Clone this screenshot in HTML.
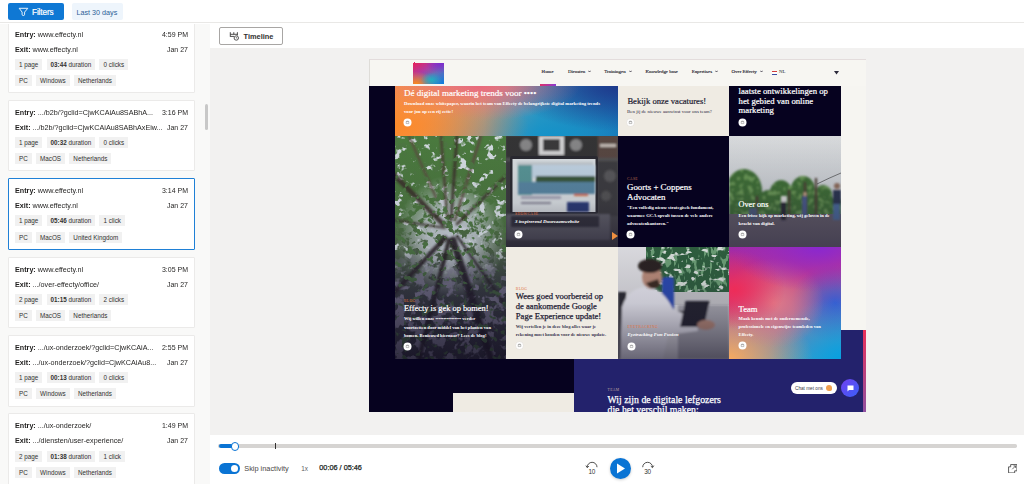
<!DOCTYPE html>
<html><head><meta charset="utf-8"><style>
*{box-sizing:border-box;margin:0;padding:0}
html,body{width:1024px;height:484px;overflow:hidden;background:#fff;font-family:"Liberation Sans",sans-serif;color:#323130}
.a{position:absolute}
.t{position:absolute}
#top{left:0;top:0;width:1024px;height:23px;background:#fff;border-bottom:1px solid #e9e8e6}
#filters{left:8px;top:3px;width:56px;height:17px;background:#0f78d4;border-radius:2px}
#last{left:72px;top:3px;width:51px;height:17px;background:#eef5fc;border-radius:2px}
#left{left:0;top:24px;width:210px;height:460px;background:#f9f9f8;overflow:hidden}
.card{position:absolute;left:8px;width:187px;height:71.5px;background:#fff;border:1px solid #ebeae9;border-radius:1px}
.card.sel{border:1.3px solid #1f80d6}
.card .l{position:absolute;left:6px;font-size:7.2px;line-height:10px;transform:scaleY(1.12);transform-origin:0 7.5px;color:#201f1e;white-space:nowrap}
.card .r{position:absolute;right:6px;font-size:7.0px;line-height:10px;transform:scaleY(1.12);transform-origin:0 7.5px;color:#201f1e;white-space:nowrap;text-align:right}
.row{position:absolute;left:6px;display:flex;gap:4.3px}
.chip{position:relative;height:11px;background:#f1f1f1;font-size:6.3px;color:#323130;white-space:nowrap;padding:0 4px;line-height:11px}
#scroll{left:205px;top:104px;width:3px;height:26px;background:#c8c8c8;border-radius:2px}
#right{left:210px;top:24px;width:814px;height:460px;background:#fff}
#tlbtn{left:219px;top:27px;width:64px;height:17.5px;border:1px solid #a8a6a4;border-radius:2px;background:#fff}
#grey{left:210px;top:48px;width:814px;height:386.5px;background:#f2f1f0}
#frame{left:369px;top:59px;width:497px;height:353px;background:#f6f5f1;overflow:hidden}
.cell{position:absolute;overflow:hidden}
.ic{position:absolute;width:8px;height:8px;border-radius:50%;background:#fff}
.ic:after{content:"";position:absolute;left:2.8px;top:3px;width:2.4px;height:2px;border:0.5px solid #888;border-radius:0.4px}
</style></head><body>
<div id="top" class="a">
<div id="filters" class="a"><svg class="a" style="left:10px;top:4px" width="11" height="11" viewBox="0 0 11 11"><path d="M1.2 1.3 H9.8 L6.6 5.1 V7.3 A1.25 1.25 0 0 1 4.1 7.3 V5.1 Z" fill="none" stroke="#fff" stroke-width="0.9" stroke-linejoin="round"/></svg>
<div class="t " style="left:24.00px;top:4.84px;font-size:8.2px;line-height:9.839999999999998px;font-family:'Liberation Sans',sans-serif;color:#fff;white-space:nowrap;font-weight:normal;letter-spacing:-0.1px;-webkit-text-stroke:0.2px #fff">Filters</div>
</div>
<div id="last" class="a"><div class="t " style="left:4.50px;top:6.28px;font-size:7.2px;line-height:8.64px;font-family:'Liberation Sans',sans-serif;color:#2b5f97;white-space:nowrap;">Last 30 days</div></div>
</div>
<div id="left" class="a">
<div class="card" style="top:-2.5px"><div class="l" style="top:7px"><b>Entry:</b> www.effecty.nl</div><div class="r" style="top:7.05px">4:59 PM</div><div class="l" style="top:22px"><b>Exit:</b> www.effecty.nl</div><div class="r" style="top:22.05px">Jan 27</div><div class="row" style="top:36.3px"><div class="chip">1 page</div><div class="chip"><b>03:44</b> duration</div><div class="chip">0 clicks</div></div><div class="row" style="top:52.4px"><div class="chip">PC</div><div class="chip">Windows</div><div class="chip">Netherlands</div></div></div>
<div class="card" style="top:75.9px"><div class="l" style="top:7px"><b>Entry:</b> .../b2b/?gclid=CjwKCAiAu8SABhA...</div><div class="r" style="top:7.05px">3:16 PM</div><div class="l" style="top:22px"><b>Exit:</b> .../b2b/?gclid=CjwKCAiAu8SABhAxEiw...</div><div class="r" style="top:22.05px">Jan 27</div><div class="row" style="top:36.3px"><div class="chip">1 page</div><div class="chip"><b>00:32</b> duration</div><div class="chip">0 clicks</div></div><div class="row" style="top:52.4px"><div class="chip">PC</div><div class="chip">MacOS</div><div class="chip">Netherlands</div></div></div>
<div class="card sel" style="top:154.2px"><div class="l" style="top:7px"><b>Entry:</b> www.effecty.nl</div><div class="r" style="top:7.05px">3:14 PM</div><div class="l" style="top:22px"><b>Exit:</b> www.effecty.nl</div><div class="r" style="top:22.05px">Jan 27</div><div class="row" style="top:36.3px"><div class="chip">1 page</div><div class="chip"><b>05:46</b> duration</div><div class="chip">1 click</div></div><div class="row" style="top:52.4px"><div class="chip">PC</div><div class="chip">MacOS</div><div class="chip">United Kingdom</div></div></div>
<div class="card" style="top:232.6px"><div class="l" style="top:7px"><b>Entry:</b> www.effecty.nl</div><div class="r" style="top:7.05px">3:05 PM</div><div class="l" style="top:22px"><b>Exit:</b> .../over-effecty/office/</div><div class="r" style="top:22.05px">Jan 27</div><div class="row" style="top:36.3px"><div class="chip">2 page</div><div class="chip"><b>01:15</b> duration</div><div class="chip">2 clicks</div></div><div class="row" style="top:52.4px"><div class="chip">PC</div><div class="chip">MacOS</div><div class="chip">Netherlands</div></div></div>
<div class="card" style="top:311.0px"><div class="l" style="top:7px"><b>Entry:</b> .../ux-onderzoek/?gclid=CjwKCAiA...</div><div class="r" style="top:7.05px">2:55 PM</div><div class="l" style="top:22px"><b>Exit:</b> .../ux-onderzoek/?gclid=CjwKCAiAu8...</div><div class="r" style="top:22.05px">Jan 27</div><div class="row" style="top:36.3px"><div class="chip">1 page</div><div class="chip"><b>00:13</b> duration</div><div class="chip">0 clicks</div></div><div class="row" style="top:52.4px"><div class="chip">PC</div><div class="chip">Windows</div><div class="chip">Netherlands</div></div></div>
<div class="card" style="top:389.4px"><div class="l" style="top:7px"><b>Entry:</b> .../ux-onderzoek/</div><div class="r" style="top:7.05px">1:49 PM</div><div class="l" style="top:22px"><b>Exit:</b> .../diensten/user-experience/</div><div class="r" style="top:22.05px">Jan 27</div><div class="row" style="top:36.3px"><div class="chip">2 page</div><div class="chip"><b>01:38</b> duration</div><div class="chip">1 click</div></div><div class="row" style="top:52.4px"><div class="chip">PC</div><div class="chip">Windows</div><div class="chip">Netherlands</div></div></div>
</div>
<div id="scroll" class="a"></div>
<div id="right" class="a"></div>
<div id="tlbtn" class="a"><svg class="a" style="left:8px;top:2px" width="12" height="12" viewBox="0 0 12 12"><path d="M2.3 2.2 V6.8 M9.4 2.2 V5.4 M5.8 2.2 V4.3 M2.3 4.3 H9.4 M2.3 6.4 H6" fill="none" stroke="#3b3a39" stroke-width="0.9"/><circle cx="8.3" cy="8" r="2.2" fill="#fff" stroke="#3b3a39" stroke-width="0.85"/><path d="M8.3 6.9 V8.1 H9.2" fill="none" stroke="#3b3a39" stroke-width="0.6"/></svg>
<div class="t " style="left:23.60px;top:4.59px;font-size:7.4px;line-height:8.88px;font-family:'Liberation Sans',sans-serif;color:#323130;white-space:nowrap;font-weight:bold">Timeline</div>
</div>
<div id="grey" class="a"></div>
<div id="frame" class="a"><div class="cell" style="left:0px;top:0px;width:497px;height:27px;background:#f7f6f2;border-top:1px solid #e3dcdc;border-left:1px solid #dedcd8"></div><svg class="a" style="left:42px;top:2px" width="35" height="25" viewBox="0 0 35 25"><defs><linearGradient id="lg1" x1="0" y1="0" x2="1" y2="1"><stop offset="0" stop-color="#e8205a"/><stop offset="0.35" stop-color="#b03aa0"/><stop offset="0.6" stop-color="#6a6ab8"/><stop offset="1" stop-color="#0a80e0"/></linearGradient><radialGradient id="lg2" cx="0.1" cy="1" r="0.6"><stop offset="0" stop-color="#ff8a1a"/><stop offset="1" stop-color="#ff8a1a" stop-opacity="0"/></radialGradient><radialGradient id="lg3" cx="0.9" cy="0" r="0.5"><stop offset="0" stop-color="#7a2ad0"/><stop offset="1" stop-color="#7a2ad0" stop-opacity="0"/></radialGradient><radialGradient id="lg4" cx="0.6" cy="0.8" r="0.35"><stop offset="0" stop-color="#20b0c0"/><stop offset="1" stop-color="#20b0c0" stop-opacity="0"/></radialGradient><filter id="rough" x="-10%" y="-10%" width="120%" height="120%"><feTurbulence type="fractalNoise" baseFrequency="0.6" numOctaves="2" seed="2"/><feDisplacementMap in="SourceGraphic" scale="1.6"/></filter></defs><g filter="url(#rough)"><rect x="2" y="2" width="31" height="21" fill="url(#lg1)"/><rect x="2" y="2" width="31" height="21" fill="url(#lg2)"/><rect x="2" y="2" width="31" height="21" fill="url(#lg3)"/><rect x="2" y="2" width="31" height="21" fill="url(#lg4)"/></g></svg><div class="t " style="left:172.60px;top:10.01px;font-size:4.9px;line-height:5.88px;font-family:'Liberation Serif',serif;color:#1e1c2e;white-space:nowrap;-webkit-text-stroke:0.12px #1e1c2e">Home</div><div class="t " style="left:198.90px;top:10.01px;font-size:4.9px;line-height:5.88px;font-family:'Liberation Serif',serif;color:#1e1c2e;white-space:nowrap;-webkit-text-stroke:0.12px #1e1c2e">Diensten</div><svg class="a" style="left:219.0px;top:11.2px" width="3" height="3" viewBox="0 0 3 3"><path d="M0.3 0.7 L1.5 2 L2.7 0.7" fill="none" stroke="#2c2a3a" stroke-width="0.8"/></svg><div class="t " style="left:235.30px;top:10.01px;font-size:4.9px;line-height:5.88px;font-family:'Liberation Serif',serif;color:#1e1c2e;white-space:nowrap;-webkit-text-stroke:0.12px #1e1c2e">Trainingen</div><svg class="a" style="left:259.5px;top:11.2px" width="3" height="3" viewBox="0 0 3 3"><path d="M0.3 0.7 L1.5 2 L2.7 0.7" fill="none" stroke="#2c2a3a" stroke-width="0.8"/></svg><div class="t " style="left:276.50px;top:10.01px;font-size:4.9px;line-height:5.88px;font-family:'Liberation Serif',serif;color:#1e1c2e;white-space:nowrap;-webkit-text-stroke:0.12px #1e1c2e">Knowledge base</div><div class="t " style="left:322.70px;top:10.01px;font-size:4.9px;line-height:5.88px;font-family:'Liberation Serif',serif;color:#1e1c2e;white-space:nowrap;-webkit-text-stroke:0.12px #1e1c2e">Expertises</div><svg class="a" style="left:346.1px;top:11.2px" width="3" height="3" viewBox="0 0 3 3"><path d="M0.3 0.7 L1.5 2 L2.7 0.7" fill="none" stroke="#2c2a3a" stroke-width="0.8"/></svg><div class="t " style="left:362.50px;top:10.01px;font-size:4.9px;line-height:5.88px;font-family:'Liberation Serif',serif;color:#1e1c2e;white-space:nowrap;-webkit-text-stroke:0.12px #1e1c2e">Over Effecty</div><svg class="a" style="left:390.5px;top:11.2px" width="3" height="3" viewBox="0 0 3 3"><path d="M0.3 0.7 L1.5 2 L2.7 0.7" fill="none" stroke="#2c2a3a" stroke-width="0.8"/></svg><div class="a" style="left:403px;top:11.8px;width:5px;height:3.8px;background:linear-gradient(#d23a3a 0 33%,#fff 33% 66%,#3a4aa0 66%)"></div><div class="t " style="left:410.00px;top:10.01px;font-size:4.9px;line-height:5.88px;font-family:'Liberation Serif',serif;color:#1e1c2e;white-space:nowrap;">NL</div><svg class="a" style="left:465px;top:12px" width="5" height="4" viewBox="0 0 5 4"><path d="M0 0 H5 L2.5 3.5Z" fill="#2c2a3a"/></svg><div class="a" style="left:171px;top:25.4px;width:16px;height:1.6px;background:linear-gradient(90deg,#e0306a,#8a3ad0)"></div><div class="cell" style="left:0px;top:27px;width:472px;height:326px;background:#06021f;"></div><div class="cell" style="left:472px;top:271px;width:22px;height:82px;background:#23226c;"></div><div class="cell" style="left:494px;top:271px;width:3px;height:82px;background:linear-gradient(#e8305a,#9050a0);"></div><div class="cell" style="left:26px;top:27px;width:223px;height:50px;background:radial-gradient(ellipse 60% 90% at 0% 80%,#fb8a2a 0%,rgba(251,138,42,0) 100%),radial-gradient(ellipse 45% 70% at 38% 0%,#e96a7c 0%,rgba(233,106,124,0) 100%),radial-gradient(ellipse 50% 90% at 100% 0%,#1e3a8c 0%,rgba(30,58,140,0) 100%),radial-gradient(ellipse 60% 100% at 70% 100%,#1492c8 0%,rgba(20,146,200,0) 100%),linear-gradient(90deg,#f49050 0%,#d8a08a 40%,#3a9ac0 65%,#1a66b0 100%);"><div class="t " style="left:9.00px;top:1.96px;font-size:9.0px;line-height:10.799999999999999px;font-family:'Liberation Serif',serif;color:#fff;white-space:nowrap;-webkit-text-stroke:0.2px #fff">Dé digital marketing trends voor ••••</div><div class="t " style="left:9.00px;top:13.76px;font-size:4.7px;line-height:7.9px;font-family:'Liberation Serif',serif;color:#fff;white-space:nowrap;font-weight:bold">Download onze whitepaper, waarin het team van Effecty de belangrijkste digital marketing trends<br>voor jou op een rij zette!</div><svg class="a" style="left:8.30px;top:32.20px" width="9" height="9" viewBox="0 0 9 9"><circle cx="4.5" cy="4.5" r="4" fill="#fff"/><path d="M3.2 3.6 H5.8 V5.6 H3.2Z M3.6 3.6 V3.1 H5.4 V3.6" fill="none" stroke="#777" stroke-width="0.45"/></svg></div><div class="cell" style="left:249px;top:27px;width:111px;height:50px;background:#efebe3;"><div class="t " style="left:9.40px;top:10.14px;font-size:8.6px;line-height:10.319999999999999px;font-family:'Liberation Serif',serif;color:#1c1a30;white-space:nowrap;-webkit-text-stroke:0.2px #1c1a30">Bekijk onze vacatures!</div><div class="t " style="left:9.00px;top:22.56px;font-size:4.95px;line-height:5.94px;font-family:'Liberation Serif',serif;color:#2a2840;white-space:nowrap;">Ben jij de nieuwe aanwinst voor ons team?</div><svg class="a" style="left:8.20px;top:32.20px" width="9" height="9" viewBox="0 0 9 9"><circle cx="4.5" cy="4.5" r="4" stroke="#d8d4cc" stroke-width="0.5" fill="#fff"/><path d="M3.2 3.6 H5.8 V5.6 H3.2Z M3.6 3.6 V3.1 H5.4 V3.6" fill="none" stroke="#777" stroke-width="0.45"/></svg></div><div class="cell" style="left:360px;top:27px;width:112px;height:50px;background:#06021f;"><div class="t " style="left:9.60px;top:-8.04px;font-size:8.7px;line-height:9.4px;font-family:'Liberation Serif',serif;color:#fff;white-space:nowrap;">nieuwste inzichten over de</div><div class="t " style="left:9.60px;top:1.36px;font-size:8.7px;line-height:9.4px;font-family:'Liberation Serif',serif;color:#fff;white-space:nowrap;-webkit-text-stroke:0.2px #fff">laatste ontwikkelingen op<br>het gebied van online<br>marketing</div><svg class="a" style="left:9.10px;top:32.20px" width="9" height="9" viewBox="0 0 9 9"><circle cx="4.5" cy="4.5" r="4" fill="#fff"/><path d="M3.2 3.6 H5.8 V5.6 H3.2Z M3.6 3.6 V3.1 H5.4 V3.6" fill="none" stroke="#777" stroke-width="0.45"/></svg></div><div class="cell" style="left:26px;top:77px;width:111px;height:223px;background:#6a7a70;"><svg class="a" style="left:0;top:0" width="111" height="223" viewBox="0 0 111 223"><defs><linearGradient id="gfsky" x1="0" y1="0" x2="0" y2="1"><stop offset="0" stop-color="#4a7a3e"/><stop offset="0.35" stop-color="#4a743e"/><stop offset="0.5" stop-color="#4a6244"/><stop offset="0.7" stop-color="#404844"/><stop offset="1" stop-color="#34343e"/></linearGradient><linearGradient id="gfb" x1="0" y1="0" x2="0" y2="1"><stop offset="0" stop-color="#1a1630" stop-opacity="0"/><stop offset="0.5" stop-color="#1a1630" stop-opacity="0.1"/><stop offset="0.7" stop-color="#1a1630" stop-opacity="0.45"/><stop offset="1" stop-color="#100c20" stop-opacity="0.72"/></linearGradient><filter id="b1" x="-20%" y="-20%" width="140%" height="140%"><feGaussianBlur stdDeviation="1.2"/></filter><filter id="b2" x="-20%" y="-20%" width="140%" height="140%"><feGaussianBlur stdDeviation="2.5"/></filter></defs><rect width="111" height="223" fill="url(#gfsky)"/>
<filter id="sky1" x="0" y="0" width="100%" height="100%" color-interpolation-filters="sRGB"><feTurbulence type="fractalNoise" baseFrequency="0.11" numOctaves="3" seed="7"/><feColorMatrix type="matrix" values="0 0 0 0 0.82  0 0 0 0 0.85  0 0 0 0 0.87  10 0 0 0 -5.9"/><feGaussianBlur stdDeviation="0.5"/></filter>
<filter id="sky3" x="0" y="0" width="100%" height="100%" color-interpolation-filters="sRGB"><feTurbulence type="fractalNoise" baseFrequency="0.12" numOctaves="3" seed="29"/><feColorMatrix type="matrix" values="0 0 0 0 0.76  0 0 0 0 0.79  0 0 0 0 0.82  10 0 0 0 -3.8"/><feGaussianBlur stdDeviation="0.6"/></filter>
<filter id="fol2" x="0" y="0" width="100%" height="100%" color-interpolation-filters="sRGB"><feTurbulence type="fractalNoise" baseFrequency="0.15" numOctaves="2" seed="11"/><feColorMatrix type="matrix" values="0 0 0 0 0.30  0 0 0 0 0.46  0 0 0 0 0.26  10 0 0 0 -6.0"/><feGaussianBlur stdDeviation="0.5"/></filter>
<radialGradient id="rg1" cx="0.5" cy="0.45" r="0.5" gradientTransform="translate(0.5 0.45) scale(1 0.55) translate(-0.5 -0.45)"><stop offset="0" stop-color="#fff"/><stop offset="0.45" stop-color="#ddd"/><stop offset="1" stop-color="#000"/></radialGradient>
<mask id="m3"><rect width="111" height="223" fill="url(#rg1)"/></mask>
<linearGradient id="mg1" x1="0" y1="0" x2="0" y2="1"><stop offset="0.5" stop-color="#fff"/><stop offset="0.68" stop-color="#000"/></linearGradient><mask id="m1"><rect width="111" height="223" fill="url(#mg1)"/></mask><linearGradient id="mg2" x1="0" y1="0" x2="0" y2="1"><stop offset="0.5" stop-color="#000"/><stop offset="0.68" stop-color="#fff"/></linearGradient><mask id="m2"><rect width="111" height="223" fill="url(#mg2)"/></mask>
<g mask="url(#m1)"><rect width="111" height="223" filter="url(#sky1)"/></g>
<g mask="url(#m3)"><rect width="111" height="223" filter="url(#sky3)"/></g>
<filter id="sky2" x="0" y="0" width="100%" height="100%" color-interpolation-filters="sRGB"><feTurbulence type="fractalNoise" baseFrequency="0.1" numOctaves="3" seed="17"/><feColorMatrix type="matrix" values="0 0 0 0 0.55  0 0 0 0 0.54  0 0 0 0 0.62  10 0 0 0 -5.0"/><feGaussianBlur stdDeviation="0.6"/></filter>
<g mask="url(#m2)"><rect width="111" height="223" filter="url(#sky2)"/></g>
<g stroke-linecap="round" filter="url(#b1)" stroke="#3a302c" opacity="0.9">
<path d="M48 88 L-4 36" stroke-width="5"/>
<path d="M42 64 L14 0" stroke-width="2.2" stroke="#5a4a40"/>
<path d="M52 80 L46 0" stroke-width="2.6" stroke="#4a3c34"/>
<path d="M56 84 L62 0" stroke-width="3"/>
<path d="M60 84 L86 0" stroke-width="2.6" stroke="#5a4a40"/>
<path d="M62 88 L111 40" stroke-width="2.8"/>
<path d="M50 92 L0 84" stroke-width="1.8"/>
<path d="M50 102 L-4 160" stroke-width="4.5" stroke="#2a2426"/>
<path d="M54 104 L24 223" stroke-width="4.5" stroke="#262024"/>
<path d="M58 104 L96 223" stroke-width="7" stroke="#221c20"/>
<path d="M62 100 L111 170" stroke-width="2.6" stroke="#2a2426"/>
</g>
<rect width="111" height="223" filter="url(#fol2)"/>
<rect width="111" height="223" fill="url(#gfb)"/></svg><div class="t " style="left:9.00px;top:162.53px;font-size:3.7px;line-height:4.44px;font-family:'Liberation Serif',serif;color:#e0703a;white-space:nowrap;letter-spacing:0.4px">BLOG</div><div class="t " style="left:9.00px;top:168.43px;font-size:8.4px;line-height:10.08px;font-family:'Liberation Serif',serif;color:#fff;white-space:nowrap;-webkit-text-stroke:0.2px #fff">Effecty is gek op bomen!</div><div class="t " style="left:9.00px;top:179.30px;font-size:4.6px;line-height:8.3px;font-family:'Liberation Serif',serif;color:#fff;white-space:nowrap;font-weight:bold">Wij willen onze •••••••••••••••• verder<br>voortzetten door middel van het planten van<br>bomen. Benieuwd hiernaar? Lees de blog!</div><svg class="a" style="left:8.10px;top:205.50px" width="9" height="9" viewBox="0 0 9 9"><circle cx="4.5" cy="4.5" r="4" fill="#fff"/><path d="M3.2 3.6 H5.8 V5.6 H3.2Z M3.6 3.6 V3.1 H5.4 V3.6" fill="none" stroke="#777" stroke-width="0.45"/></svg></div><div class="cell" style="left:137px;top:77px;width:112px;height:111px;background:#3a3a3c;"><svg class="a" style="left:0;top:0" width="112" height="111" viewBox="0 0 112 111"><defs><linearGradient id="glp" x1="0" y1="0" x2="0" y2="1"><stop offset="0" stop-color="#201c30" stop-opacity="0.05"/><stop offset="0.6" stop-color="#201c30" stop-opacity="0.15"/><stop offset="1" stop-color="#141024" stop-opacity="0.55"/></linearGradient><filter id="b1" x="-20%" y="-20%" width="140%" height="140%"><feGaussianBlur stdDeviation="1.2"/></filter><filter id="b2" x="-20%" y="-20%" width="140%" height="140%"><feGaussianBlur stdDeviation="2.5"/></filter></defs><rect width="112" height="111" fill="#4a4a4e"/>
<g filter="url(#b1)">
<rect x="0" y="0" width="112" height="22" fill="#343436"/>
<circle cx="20" cy="9" r="6" fill="#8a8a8a"/>
<circle cx="70" cy="9" r="6" fill="#8a8a8a"/>
<rect x="33" y="0" width="25" height="19" fill="#dcdcdc"/>
<rect x="37" y="3" width="17" height="12" fill="#3a3a3a"/>
<rect x="92" y="0" width="20" height="22" fill="#5a4a42"/>
<rect x="94" y="8" width="16" height="3" fill="#c8c0b8"/>
<rect x="0" y="22" width="112" height="3" fill="#555"/>
<rect x="92" y="25" width="20" height="55" fill="#3e3e40"/>
<circle cx="104" cy="40" r="6" fill="#5a5a5c"/>
<circle cx="100" cy="60" r="5" fill="#555"/>
<rect x="0" y="25" width="6" height="55" fill="#3a3a3c"/>
</g>
<rect x="4" y="20" width="88" height="58" rx="2" fill="#2a2a30"/>
<rect x="6.5" y="23" width="83" height="53" fill="#e2e8ea"/>
<g filter="url(#b1)">
<rect x="11" y="26" width="76" height="3" fill="#c8d0d4"/>
<rect x="12" y="29" width="77" height="13" fill="#c8dceb"/>
<rect x="12" y="29" width="14" height="30" fill="#5a9a9a"/>
<rect x="30" y="40" width="59" height="6" fill="#3a5a3a"/>
<rect x="12" y="46" width="77" height="12" fill="#5a8aa6"/>
<rect x="15" y="60" width="40" height="3" fill="#aab"/>
<rect x="15" y="66" width="30" height="2" fill="#889"/>
<rect x="61" y="66" width="22" height="10" fill="#2a3a78"/>
<rect x="68" y="58" width="14" height="2" fill="#e07040"/>
</g>
<rect x="0" y="78" width="104" height="26" fill="#66666e" filter="url(#b1)"/>
<rect x="5" y="80" width="88" height="11" fill="#34343c" filter="url(#b1)"/>
<rect width="112" height="111" fill="url(#glp)"/></svg><div class="t " style="left:9.00px;top:76.03px;font-size:3.7px;line-height:4.44px;font-family:'Liberation Serif',serif;color:#e07040;white-space:nowrap;letter-spacing:0.4px">SHOWCASE</div><div class="t " style="left:9.00px;top:82.91px;font-size:4.9px;line-height:5.88px;font-family:'Liberation Serif',serif;color:#fff;white-space:nowrap;font-weight:bold;font-style:italic">3 inspirerend Duurzaamwebsite</div><svg class="a" style="left:8.40px;top:93.50px" width="9" height="9" viewBox="0 0 9 9"><circle cx="4.5" cy="4.5" r="4" fill="#fff"/><path d="M3.2 3.6 H5.8 V5.6 H3.2Z M3.6 3.6 V3.1 H5.4 V3.6" fill="none" stroke="#777" stroke-width="0.45"/></svg><svg class="a" style="left:105px;top:96px" width="7" height="8"><path d="M1 0 L7 4 L1 8Z" fill="#f09040"/></svg></div><div class="cell" style="left:249px;top:77px;width:111px;height:111px;background:#06021f;"><div class="t " style="left:9.00px;top:41.33px;font-size:3.7px;line-height:4.44px;font-family:'Liberation Serif',serif;color:#c07050;white-space:nowrap;letter-spacing:0.4px">CASE</div><div class="t " style="left:9.00px;top:46.80px;font-size:8.9px;line-height:9.8px;font-family:'Liberation Serif',serif;color:#fff;white-space:nowrap;-webkit-text-stroke:0.2px #fff">Goorts + Coppens<br>Advocaten</div><div class="t " style="left:9.00px;top:67.93px;font-size:4.65px;line-height:8px;font-family:'Liberation Serif',serif;color:#fff;white-space:nowrap;font-weight:bold">"Een volledig nieuw strategisch fundament,<br>waarmee GCA opvalt tussen de vele andere<br>advocatenkantoren."</div><svg class="a" style="left:8.30px;top:94.30px" width="9" height="9" viewBox="0 0 9 9"><circle cx="4.5" cy="4.5" r="4" fill="#fff"/><path d="M3.2 3.6 H5.8 V5.6 H3.2Z M3.6 3.6 V3.1 H5.4 V3.6" fill="none" stroke="#777" stroke-width="0.45"/></svg></div><div class="cell" style="left:360px;top:77px;width:112px;height:111px;background:#8a8a90;"><svg class="a" style="left:0;top:0" width="112" height="111" viewBox="0 0 112 111"><defs><linearGradient id="gsky" x1="0" y1="0" x2="0" y2="1"><stop offset="0" stop-color="#d8dadc"/><stop offset="0.6" stop-color="#c8ccd0"/><stop offset="1" stop-color="#b4b8c0"/></linearGradient><linearGradient id="goo" x1="0" y1="0" x2="0" y2="1"><stop offset="0" stop-color="#201c30" stop-opacity="0"/><stop offset="0.45" stop-color="#201c30" stop-opacity="0.08"/><stop offset="1" stop-color="#1a1430" stop-opacity="0.4"/></linearGradient><filter id="b1" x="-20%" y="-20%" width="140%" height="140%"><feGaussianBlur stdDeviation="1.2"/></filter><filter id="b2" x="-20%" y="-20%" width="140%" height="140%"><feGaussianBlur stdDeviation="2.5"/></filter></defs><rect width="112" height="111" fill="#b8bcc4"/>
<rect width="112" height="80" fill="url(#gsky)"/>
<filter id="fol4" x="0" y="0" width="100%" height="100%" color-interpolation-filters="sRGB"><feTurbulence type="fractalNoise" baseFrequency="0.2" numOctaves="2" seed="5"/><feColorMatrix type="matrix" values="0 0 0 0 0.42  0 0 0 0 0.60  0 0 0 0 0.34  10 0 0 0 -5.6"/></filter>
<clipPath id="treeclip"><ellipse cx="15" cy="55" rx="18" ry="22"/><ellipse cx="40" cy="66" rx="12" ry="12"/><ellipse cx="52" cy="60" rx="12" ry="16"/><ellipse cx="74" cy="56" rx="13" ry="16"/><ellipse cx="94" cy="62" rx="10" ry="13"/><ellipse cx="106" cy="70" rx="8" ry="8"/><rect x="0" y="66" width="112" height="14"/></clipPath>
<g filter="url(#b1)"><g clip-path="url(#treeclip)">
<rect width="112" height="90" fill="#3e6c34"/>
<rect width="112" height="90" filter="url(#fol4)"/>
</g></g>
<g stroke="#4a3a32" stroke-width="2.2" filter="url(#b1)">
<path d="M28 60 V86"/><path d="M60 54 V84"/><path d="M76 46 V86"/><path d="M87 42 V86"/>
</g>
<path d="M88 48 Q100 42 112 37" stroke="#333" stroke-width="0.6" fill="none"/>
<rect x="0" y="78" width="112" height="33" fill="#625d68"/>
<g filter="url(#b1)">
<rect x="104" y="54" width="8" height="14" fill="#2a3550"/>
<rect x="104" y="68" width="7" height="16" fill="#4a6a9a"/>
<circle cx="108" cy="50" r="3" fill="#8a6a5a"/>
<rect x="73" y="60" width="5" height="22" fill="#4a5a8a"/>
<circle cx="76" cy="58" r="2.2" fill="#b89a80"/>
<rect x="52" y="64" width="5" height="20" fill="#2a2a34"/>
<rect x="52" y="60" width="6" height="6" fill="#ddd"/>
<rect x="20" y="72" width="8" height="12" fill="#4a5a7a"/>
</g>
<rect width="112" height="111" fill="url(#goo)"/></svg><div class="t " style="left:9.60px;top:64.11px;font-size:8.2px;line-height:9.839999999999998px;font-family:'Liberation Serif',serif;color:#fff;white-space:nowrap;-webkit-text-stroke:0.2px #fff">Over ons</div><div class="t " style="left:9.60px;top:75.85px;font-size:4.6px;line-height:8.2px;font-family:'Liberation Serif',serif;color:#fff;white-space:nowrap;font-weight:bold">Een frisse kijk op marketing, wij geloven in de<br>kracht van digital.</div><svg class="a" style="left:8.90px;top:93.50px" width="9" height="9" viewBox="0 0 9 9"><circle cx="4.5" cy="4.5" r="4" fill="#fff"/><path d="M3.2 3.6 H5.8 V5.6 H3.2Z M3.6 3.6 V3.1 H5.4 V3.6" fill="none" stroke="#777" stroke-width="0.45"/></svg></div><div class="cell" style="left:137px;top:188px;width:112px;height:112px;background:#efebe3;"><div class="t " style="left:9.80px;top:39.73px;font-size:3.7px;line-height:4.44px;font-family:'Liberation Serif',serif;color:#e07040;white-space:nowrap;letter-spacing:0.4px">BLOG</div><div class="t " style="left:9.80px;top:45.25px;font-size:8.6px;line-height:9.7px;font-family:'Liberation Serif',serif;color:#1e1c34;white-space:nowrap;-webkit-text-stroke:0.25px #1e1c34">Wees goed voorbereid op<br>de aankomende Google<br>Page Experience update!</div><div class="t " style="left:9.80px;top:76.10px;font-size:4.6px;line-height:8.3px;font-family:'Liberation Serif',serif;color:#3a3850;white-space:nowrap;font-weight:bold">Wij vertellen je in deze blog alles waar je<br>rekening moet houden voor de nieuwe update.</div><svg class="a" style="left:8.80px;top:94.10px" width="9" height="9" viewBox="0 0 9 9"><circle cx="4.5" cy="4.5" r="4" stroke="#d8d4cc" stroke-width="0.5" fill="#fff"/><path d="M3.2 3.6 H5.8 V5.6 H3.2Z M3.6 3.6 V3.1 H5.4 V3.6" fill="none" stroke="#777" stroke-width="0.45"/></svg></div><div class="cell" style="left:249px;top:188px;width:111px;height:112px;background:#9a9aa4;"><svg class="a" style="left:0;top:0" width="111" height="112" viewBox="0 0 111 112"><defs><linearGradient id="get" x1="0" y1="0" x2="0" y2="1"><stop offset="0" stop-color="#201c30" stop-opacity="0.02"/><stop offset="0.5" stop-color="#201c30" stop-opacity="0.15"/><stop offset="1" stop-color="#141024" stop-opacity="0.6"/></linearGradient><filter id="b1" x="-20%" y="-20%" width="140%" height="140%"><feGaussianBlur stdDeviation="1.2"/></filter><filter id="b2" x="-20%" y="-20%" width="140%" height="140%"><feGaussianBlur stdDeviation="2.5"/></filter></defs><rect width="111" height="112" fill="#dcdce0"/>
<filter id="fol5" x="0" y="0" width="100%" height="100%" color-interpolation-filters="sRGB"><feTurbulence type="fractalNoise" baseFrequency="0.12 0.2" numOctaves="2" seed="9"/><feColorMatrix type="matrix" values="0 0 0 0 0.84  0 0 0 0 0.87  0 0 0 0 0.85  10 0 0 0 -5.9"/></filter>
<rect x="28" y="0" width="83" height="45" fill="#2e5e3e"/>
<filter id="fol6" x="0" y="0" width="100%" height="100%" color-interpolation-filters="sRGB"><feTurbulence type="fractalNoise" baseFrequency="0.25 0.1" numOctaves="2" seed="3"/><feColorMatrix type="matrix" values="0 0 0 0 0.42  0 0 0 0 0.62  0 0 0 0 0.46  10 0 0 0 -5.5"/></filter>
<rect x="28" y="0" width="83" height="45" filter="url(#fol6)"/>
<rect x="28" y="0" width="83" height="45" filter="url(#fol5)"/>
<rect x="28" y="45" width="83" height="13" fill="#c4c4c8"/>
<g filter="url(#b1)">
<rect x="60" y="58" width="51" height="54" fill="#a8a8b0"/>
<rect x="0" y="45" width="8" height="67" fill="#2a2a30"/>
<rect x="44" y="30" width="12" height="40" rx="3" fill="#2a4ab0"/>
<rect x="46" y="64" width="20" height="4" fill="#222"/>
<path d="M2 112 L4 60 Q10 40 30 40 Q45 42 55 62 L78 72 L80 84 L50 88 L45 112Z" fill="#e6e6ee"/>
<ellipse cx="34" cy="30" rx="10" ry="12" fill="#b88a78"/>
<ellipse cx="32" cy="19" rx="12" ry="7" fill="#2a2220"/>
<path d="M28 36 Q34 46 42 38 L40 32Z" fill="#3a2a24"/>
<rect x="79" y="54" width="24" height="26" fill="#24242e" transform="skewX(-12)"/>
<ellipse cx="88" cy="78" rx="9" ry="5" fill="#b88a78"/>
</g>
<rect width="111" height="112" fill="url(#get)"/></svg><div class="t " style="left:9.40px;top:77.53px;font-size:3.7px;line-height:4.44px;font-family:'Liberation Serif',serif;color:#e07040;white-space:nowrap;letter-spacing:0.4px">EYETRACKING</div><div class="t " style="left:9.40px;top:85.11px;font-size:5.0px;line-height:6.0px;font-family:'Liberation Serif',serif;color:#fff;white-space:nowrap;font-weight:bold;font-style:italic">Eyetracking Fun Fusion</div><svg class="a" style="left:8.50px;top:94.50px" width="9" height="9" viewBox="0 0 9 9"><circle cx="4.5" cy="4.5" r="4" fill="#fff"/><path d="M3.2 3.6 H5.8 V5.6 H3.2Z M3.6 3.6 V3.1 H5.4 V3.6" fill="none" stroke="#777" stroke-width="0.45"/></svg></div><div class="cell" style="left:360px;top:188px;width:112px;height:112px;background:radial-gradient(ellipse 80% 40% at 80% 0%,#8a28d0 0%,rgba(138,40,208,0) 100%),radial-gradient(ellipse 45% 35% at 5% 38%,#ee2c58 0%,rgba(238,44,88,0) 100%),radial-gradient(ellipse 45% 40% at 40% 50%,#e07a88 0%,rgba(224,122,136,0) 100%),radial-gradient(ellipse 75% 50% at 0% 100%,#f8aa60 0%,rgba(248,170,96,0) 100%),radial-gradient(ellipse 65% 55% at 100% 100%,#08a0e0 0%,rgba(8,160,224,0) 100%),radial-gradient(ellipse 40% 35% at 95% 50%,#3a5ad0 0%,rgba(58,90,208,0) 100%),linear-gradient(165deg,#a02aa8 0%,#c83a80 35%,#9a70a0 60%,#40a0c8 100%);"><div class="t " style="left:9.60px;top:56.84px;font-size:8.6px;line-height:10.319999999999999px;font-family:'Liberation Serif',serif;color:#fff;white-space:nowrap;-webkit-text-stroke:0.2px #fff">Team</div><div class="t " style="left:9.60px;top:67.85px;font-size:4.6px;line-height:8px;font-family:'Liberation Serif',serif;color:#fff;white-space:nowrap;font-weight:bold">Maak kennis met de ondernemende,<br>professionele en eigenwijze teamleden van<br>Effecty.</div><svg class="a" style="left:8.90px;top:94.20px" width="9" height="9" viewBox="0 0 9 9"><circle cx="4.5" cy="4.5" r="4" fill="#fff"/><path d="M3.2 3.6 H5.8 V5.6 H3.2Z M3.6 3.6 V3.1 H5.4 V3.6" fill="none" stroke="#777" stroke-width="0.45"/></svg></div><div class="cell" style="left:84px;top:334px;width:121px;height:19px;background:#efebe3;"></div><div class="cell" style="left:205px;top:300px;width:289px;height:53px;background:#23226c;"><div class="t " style="left:33.50px;top:29.43px;font-size:3.7px;line-height:4.44px;font-family:'Liberation Serif',serif;color:#c0a8a0;white-space:nowrap;letter-spacing:0.4px">TEAM</div><div class="t " style="left:33.50px;top:35.64px;font-size:9.8px;line-height:10.5px;font-family:'Liberation Serif',serif;color:#fff;white-space:nowrap;-webkit-text-stroke:0.25px #fff">Wij zijn de digitale lefgozers<br>die het verschil maken:</div></div><div class="a" style="left:421.5px;top:322.9px;width:46.7px;height:12.3px;border-radius:6px;background:#fff"></div><div class="t " style="left:426.00px;top:327.05px;font-size:4.7px;line-height:5.64px;font-family:'Liberation Sans',sans-serif;color:#3a3a48;white-space:nowrap;">Chat met ons</div><div class="a" style="left:457px;top:325.5px;width:6px;height:6px;border-radius:50% 50% 30% 50%;background:#f0a050"></div><div class="a" style="left:472px;top:320px;width:18px;height:18px;border-radius:50%;background:linear-gradient(135deg,#7040f0,#3a60f8)"></div><svg class="a" style="left:477.5px;top:326px" width="7" height="7" viewBox="0 0 7 7"><path d="M0.5 0.5 H6.5 V5 H2 L0.5 6.5Z" fill="#fff"/></svg></div>
<div class="a" style="left:218px;top:444.2px;width:799px;height:3.4px;background:#d6d4d2;border-radius:1.7px"></div><div class="a" style="left:218.5px;top:444px;width:16px;height:4px;background:#0a74d4;border-radius:2px"></div><div class="a" style="left:230.5px;top:442px;width:8.5px;height:8.5px;border-radius:50%;background:#fff;border:1.5px solid #0a74d4"></div><div class="a" style="left:275px;top:443px;width:1.2px;height:6px;background:#323130"></div><div class="a" style="left:218.5px;top:463px;width:21.5px;height:11px;border-radius:6px;background:#0a74d4"></div><div class="a" style="left:231px;top:465px;width:7px;height:7px;border-radius:50%;background:#fff"></div><div class="t " style="left:244.30px;top:464.64px;font-size:7.35px;line-height:8.819999999999999px;font-family:'Liberation Sans',sans-serif;color:#4a4846;white-space:nowrap;">Skip inactivity</div><div class="t " style="left:301.30px;top:464.74px;font-size:6.4px;line-height:7.68px;font-family:'Liberation Sans',sans-serif;color:#605e5c;white-space:nowrap;">1x</div><div class="t " style="left:319.30px;top:464.29px;font-size:7.3px;line-height:8.76px;font-family:'Liberation Sans',sans-serif;color:#201f1e;white-space:nowrap;font-weight:normal;-webkit-text-stroke:0.25px #201f1e">00:06 / 05:46</div><div class="a" style="left:609.5px;top:457.8px;width:21px;height:21px;border-radius:50%;background:#0a74d4;box-shadow:0 1px 3px rgba(0,0,0,0.2)"></div><svg class="a" style="left:616px;top:463px" width="10" height="11" viewBox="0 0 10 11"><path d="M1 0.5 L9 5.5 L1 10.5Z" fill="#fff"/></svg><svg class="a" style="left:585px;top:460px" width="14" height="15" viewBox="0 0 14 15"><path d="M2.2 7.2 A4.9 4.9 0 0 1 12 7.2" fill="none" stroke="#323130" stroke-width="0.85"/><path d="M0.9 5.6 L2.2 7.6 L3.9 6.2" fill="none" stroke="#323130" stroke-width="0.85"/><text x="3.6" y="13.5" font-size="6.4" font-family="Liberation Sans" fill="#323130" letter-spacing="-0.3">10</text></svg><svg class="a" style="left:641px;top:460px" width="14" height="15" viewBox="0 0 14 15"><path d="M1.7 7.2 A4.9 4.9 0 0 1 11.5 7.2" fill="none" stroke="#323130" stroke-width="0.85"/><path d="M9.8 6.2 L11.5 7.6 L12.8 5.6" fill="none" stroke="#323130" stroke-width="0.85"/><text x="3.3" y="13.5" font-size="6.4" font-family="Liberation Sans" fill="#323130" letter-spacing="-0.3">30</text></svg><svg class="a" style="left:1007.6px;top:463.6px" width="9.5" height="9.5" viewBox="0 0 10 10"><path d="M0.6 3 H2.8 V0.6 H9.4 V7.2 H7 V9.4 H0.6Z" fill="none" stroke="#444" stroke-width="0.9"/><path d="M4.5 5.5 L8 2 M5.8 2 H8 V4.2" fill="none" stroke="#444" stroke-width="0.8"/></svg>
</body></html>
